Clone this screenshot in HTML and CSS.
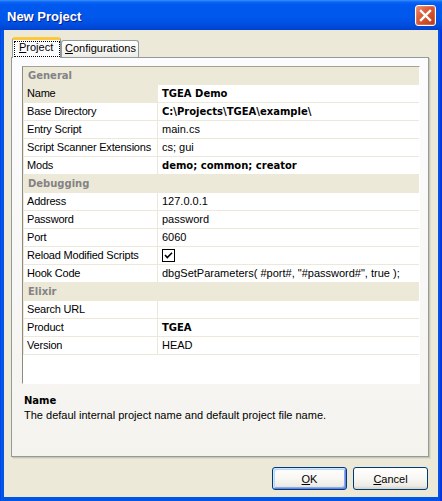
FILE: index.html
```html
<!DOCTYPE html>
<html>
<head>
<meta charset="utf-8">
<title>New Project</title>
<link rel="stylesheet" href="styles.css">
</head>
<body>
<div class="window">
  <div class="titlebar">
    <span class="title">New Project</span>
    <button class="close" aria-label="Close">
      <svg width="19" height="19" viewBox="0 0 19 19"><path d="M5 5 L14 14 M14 5 L5 14" stroke="#fff" stroke-width="2.4" stroke-linecap="square" fill="none"/></svg>
    </button>
  </div>
  <div class="client">
    <div class="tabs">
      <div class="tab active"><span class="focus"><u>P</u>roject</span></div>
      <div class="tab"><u>C</u>onfigurations</div>
    </div>
    <div class="panel">
      <div class="grid">
        <div class="cat">General</div>
        <div class="row selected"><div class="label">Name</div><div class="value bold">TGEA Demo</div></div>
        <div class="row"><div class="label">Base Directory</div><div class="value bold">C:\Projects\TGEA\example\</div></div>
        <div class="row"><div class="label">Entry Script</div><div class="value">main.cs</div></div>
        <div class="row"><div class="label">Script Scanner Extensions</div><div class="value">cs; gui</div></div>
        <div class="row"><div class="label">Mods</div><div class="value bold">demo; common; creator</div></div>
        <div class="cat">Debugging</div>
        <div class="row"><div class="label">Address</div><div class="value">127.0.0.1</div></div>
        <div class="row"><div class="label">Password</div><div class="value">password</div></div>
        <div class="row"><div class="label">Port</div><div class="value">6060</div></div>
        <div class="row"><div class="label">Reload Modified Scripts</div><div class="value"><svg class="check" width="13" height="13" viewBox="0 0 13 13"><rect x="0.5" y="0.5" width="12" height="12" fill="#fff" stroke="#000"/><path d="M3 6 L5.3 8.5 L10 3.7" fill="none" stroke="#000" stroke-width="1.6"/></svg></div></div>
        <div class="row"><div class="label">Hook Code</div><div class="value">dbgSetParameters( #port#, "#password#", true );</div></div>
        <div class="cat">Elixir</div>
        <div class="row"><div class="label">Search URL</div><div class="value"></div></div>
        <div class="row"><div class="label">Product</div><div class="value bold">TGEA</div></div>
        <div class="row"><div class="label">Version</div><div class="value">HEAD</div></div>
      </div>
      <div class="desc">
        <div class="desc-title">Name</div>
        <div class="desc-text">The defaul internal project name and default project file name.</div>
      </div>
    </div>
    <div class="buttons">
      <button class="btn default"><u>O</u>K</button>
      <button class="btn"><u>C</u>ancel</button>
    </div>
  </div>
</div>
</body>
</html>
```

FILE: styles.css
```css
* { box-sizing: border-box; }
html, body { margin: 0; padding: 0; }
body {
  width: 442px;
  height: 501px;
  overflow: hidden;
  background: #0055E5;
  font-family: "Liberation Sans", Arial, sans-serif;
  font-size: 11px;
  color: #000;
}
.window {
  width: 442px;
  height: 501px;
  display: flex;
  flex-direction: column;
  background: linear-gradient(to right, #0831D9 0, #0058EE 1px, #0055E5 3px, #0055E5 438px, #0058EE 439px, #0831D9 441px);
}
.titlebar {
  height: 30px;
  flex: none;
  display: flex;
  align-items: flex-start;
  background: linear-gradient(#3D8EFC 0, #0A66F7 2px, #0058EE 5px, #0057EC 17px, #0051E3 23px, #0046D6 28px, #0040CC 30px);
}
.title {
  flex: 1;
  padding: 9px 0 0 7px;
  font-weight: bold;
  font-size: 13px;
  line-height: 15px;
  color: #fff;
  text-shadow: 1px 1px 0 #0B1F8E;
}
.close {
  width: 21px;
  height: 21px;
  margin: 5px 6px 0 0;
  padding: 0;
  border: 1px solid #fff;
  border-radius: 3px;
  background: linear-gradient(135deg, #EE8E70 0%, #DD6240 35%, #CC4A26 70%, #B8391A 100%);
  box-shadow: inset 0 0 0 1px rgba(255,160,130,0.35);
  display: flex;
  align-items: center;
  justify-content: center;
}
.close svg { display: block; }
.client {
  flex: 1;
  margin: 0 4px 4px;
  background: #ECE9D8;
  padding: 7px 9px 0 7px;
  display: flex;
  flex-direction: column;
}
.tabs {
  display: flex;
  align-items: flex-end;
  height: 20px;
  padding-left: 1px;
  position: relative;
  z-index: 1;
}
.tab {
  height: 17px;
  width: 78px;
  border: 1px solid #919B9C;
  border-bottom: none;
  border-radius: 3px 3px 0 0;
  background: linear-gradient(#FFFFFF, #F7F6F2 60%, #ECEBE6);
  padding: 0 0 0 3px;
  line-height: 14px;
  white-space: nowrap;
}
.tab.active {
  height: 21px;
  width: 49px;
  margin-bottom: -1px;
  border-top: 3px solid #FFC83C;
  background: #FCFCFE;
  padding: 0;
}
.focus {
  display: block;
  width: 46px;
  margin: 1px 0 0 1px;
  border: 1px dotted #000;
  padding: 0 4px 3px 4px;
  line-height: 11px;
}
.panel {
  width: 418px;
  height: 400px;
  border: 1px solid #919B9C;
  background: linear-gradient(#FCFCFE, #F4F3EE);
  box-shadow: 1px 1px 0 #C9C6B6, 2px 2px 0 #DEDBCB;
  padding: 8px 0 0 10px;
}
.grid {
  width: 398px;
  height: 318px;
  background: #fff;
  border-top: 1px solid #A5A28F;
  border-left: 1px solid #8E8B7C;
  border-right: 1px solid #fff;
  border-bottom: 1px solid #fff;
  overflow: hidden;
}
.cat {
  height: 18px;
  background: #ECE9D8;
  padding-left: 5px;
  line-height: 17px;
  font-family: "DejaVu Sans", Verdana, sans-serif;
  font-size: 10px;
  font-weight: bold;
  color: #848284;
}
.row {
  height: 18px;
  display: grid;
  grid-template-columns: 133px 1fr;
  column-gap: 1px;
  padding: 0 0 1px 1px;
  background: #ECE9D8;
}
.label, .value {
  background: #fff;
  line-height: 17px;
  white-space: nowrap;
  overflow: hidden;
}
.label { padding-left: 3px; letter-spacing: -0.2px; }
.value { padding-left: 4px; }
.row.selected .label { background: #ECE9D8; }
.bold {
  font-family: "DejaVu Sans", Verdana, sans-serif;
  font-size: 10px;
  font-weight: bold;
}
.check { display: block; margin-top: 2px; }
.desc {
  margin-top: 10px;
  padding-left: 2px;
  line-height: 14px;
}
.desc-title {
  font-family: "DejaVu Sans", Verdana, sans-serif;
  font-size: 10px;
  font-weight: bold;
}
.buttons {
  display: flex;
  justify-content: flex-end;
  gap: 6px;
  margin-top: 10px;
  margin-right: 1px;
}
.btn {
  width: 75px;
  height: 23px;
  padding: 0;
  border: 1px solid #003C74;
  border-radius: 3px;
  background: linear-gradient(#FFFFFF 0%, #F8F7F3 50%, #ECEBE5 85%, #D6D0C5 100%);
  font-family: "Liberation Sans", Arial, sans-serif;
  font-size: 11px;
  color: #000;
  line-height: 20px;
}
.btn.default {
  box-shadow: inset 1px 1px 0 #CEE7FF, inset -1px -1px 0 #6982EE, inset 2px 2px 0 #BCD4F6, inset -2px -2px 0 #89ADE4;
}
```
